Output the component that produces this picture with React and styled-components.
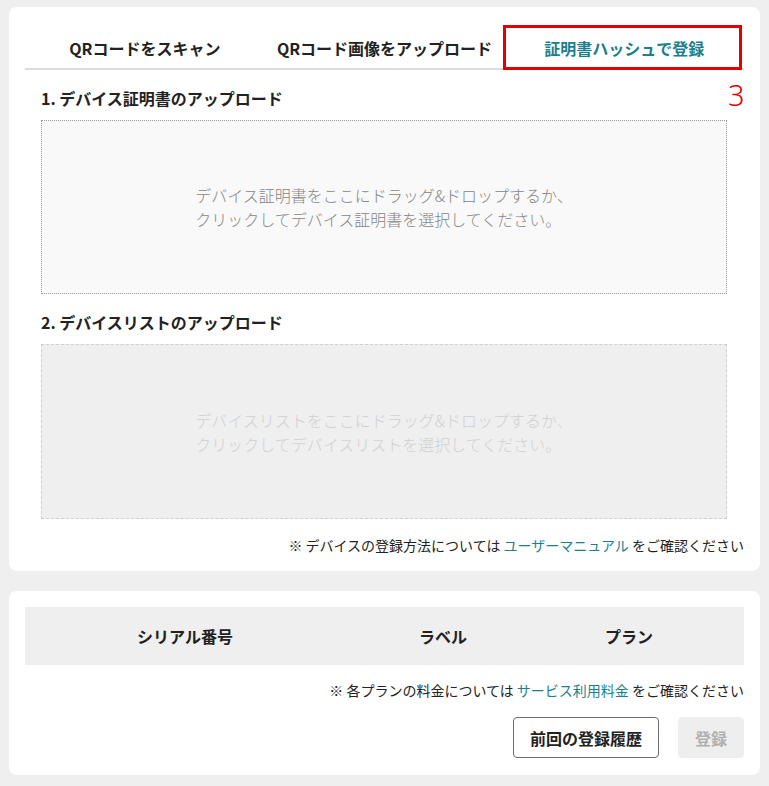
import React from "react";
import styled, { createGlobalStyle } from "styled-components";

const Global = createGlobalStyle`
  html, body { margin: 0; padding: 0; background: #efefef; }
  body { font-family: "Noto Sans CJK JP", "Noto Sans", sans-serif; color: #222; }
  * { box-sizing: border-box; }
`;

const Page = styled.div`
  padding: 7px 9px 11px 9px;
  display: flex;
  flex-direction: column;
  gap: 20px;
`;

const Card = styled.section`
  position: relative;
  background: #fff;
  border-radius: 8px;
  padding: ${(p) => p.$pad};
`;

const Tabs = styled.div`
  display: grid;
  grid-template-columns: repeat(3, 1fr);
`;

const Tab = styled.button`
  height: 45px;
  padding: 2px 0 0;
  border: none;
  background: none;
  border-bottom: 2px solid #dcdcdc;
  font-family: inherit;
  font-size: 16px;
  font-weight: 700;
  color: ${(p) => (p.$active ? "#1b7f8d" : "#222")};
  cursor: pointer;
`;

const Annotation = styled.div`
  position: absolute;
  left: 494px;
  top: 18px;
  width: 239px;
  height: 45px;
  border: 3px solid #e30000;
  pointer-events: none;
`;

const AnnotationNum = styled.div`
  position: absolute;
  left: 719px;
  top: 68px;
  font-family: "Noto Sans", sans-serif;
  font-size: 29px;
  font-weight: 300;
  color: #e30000;
`;

const Body = styled.div`
  padding: 16px 17px 0 16px;
  display: flex;
  flex-direction: column;
`;

const Heading = styled.h3`
  margin: 0;
  font-size: 16px;
  line-height: 24px;
  font-weight: 700;
  color: #222;
`;

const Drop = styled.div`
  margin: 10px 0 16px;
  height: ${(p) => p.$h}px;
  display: flex;
  align-items: center;
  justify-content: center;
  text-align: left;
  font-size: 16px;
  font-weight: 300;
  line-height: 24px;
  background: ${(p) => (p.$disabled ? "#efefef" : "#f9f9f9")};
  border: 1px ${(p) => (p.$disabled ? "dashed #d0d0d0" : "dotted #9a9a9a")};
  color: ${(p) => (p.$disabled ? "#cfcfcf" : "#858585")};
`;

const Note = styled.p`
  margin: ${(p) => p.$m};
  text-align: right;
  font-size: 14px;
  line-height: 20px;
  color: #222;
`;

const Link = styled.a`
  color: #1b7f8d;
  text-decoration: none;
`;

const Table = styled.div`
  display: grid;
  grid-template-columns: 320px 196px 176px 1fr;
  height: 58px;
  align-items: center;
  background: #efefef;
`;

const Th = styled.div`
  text-align: center;
  font-size: 16px;
  font-weight: 700;
  color: #222;
`;

const Actions = styled.div`
  display: flex;
  justify-content: flex-end;
  gap: 19px;
  margin-top: 17px;
`;

const Button = styled.button`
  height: 41px;
  padding: 0 ${(p) => (p.$primary ? "16px" : "16px")};
  border-radius: 4px;
  font-family: inherit;
  font-size: 16px;
  font-weight: 700;
  border: 1px solid ${(p) => (p.$primary ? "#eeeeee" : "#6b6b6b")};
  background: ${(p) => (p.$primary ? "#eeeeee" : "#fff")};
  color: ${(p) => (p.$primary ? "#b0b0b0" : "#222")};
`;

export default function App() {
  return (
    <>
      <Global />
      <Page>
        <Card $pad="18px 16px 16px 16px">
          <Tabs>
            <Tab>QRコードをスキャン</Tab>
            <Tab>QRコード画像をアップロード</Tab>
            <Tab $active>証明書ハッシュで登録</Tab>
          </Tabs>
          <Annotation />
          <AnnotationNum>3</AnnotationNum>
          <Body>
            <Heading>1. デバイス証明書のアップロード</Heading>
            <Drop $h={174}>
              <div>
                デバイス証明書をここにドラッグ&ドロップするか、
                <br />
                クリックしてデバイス証明書を選択してください。
              </div>
            </Drop>
            <Heading>2. デバイスリストのアップロード</Heading>
            <Drop $h={175} $disabled>
              <div>
                デバイスリストをここにドラッグ&ドロップするか、
                <br />
                クリックしてデバイスリストを選択してください。
              </div>
            </Drop>
          </Body>
          <Note $m="0 0 0">
            ※ デバイスの登録方法については <Link>ユーザーマニュアル</Link> をご確認ください
          </Note>
        </Card>
        <Card $pad="16px 16px 17px 16px">
          <Table>
            <Th>シリアル番号</Th>
            <Th>ラベル</Th>
            <Th>プラン</Th>
            <Th />
          </Table>
          <Note $m="15px 0 0">
            ※ 各プランの料金については <Link>サービス利用料金</Link> をご確認ください
          </Note>
          <Actions>
            <Button>前回の登録履歴</Button>
            <Button $primary>登録</Button>
          </Actions>
        </Card>
      </Page>
    </>
  );
}
